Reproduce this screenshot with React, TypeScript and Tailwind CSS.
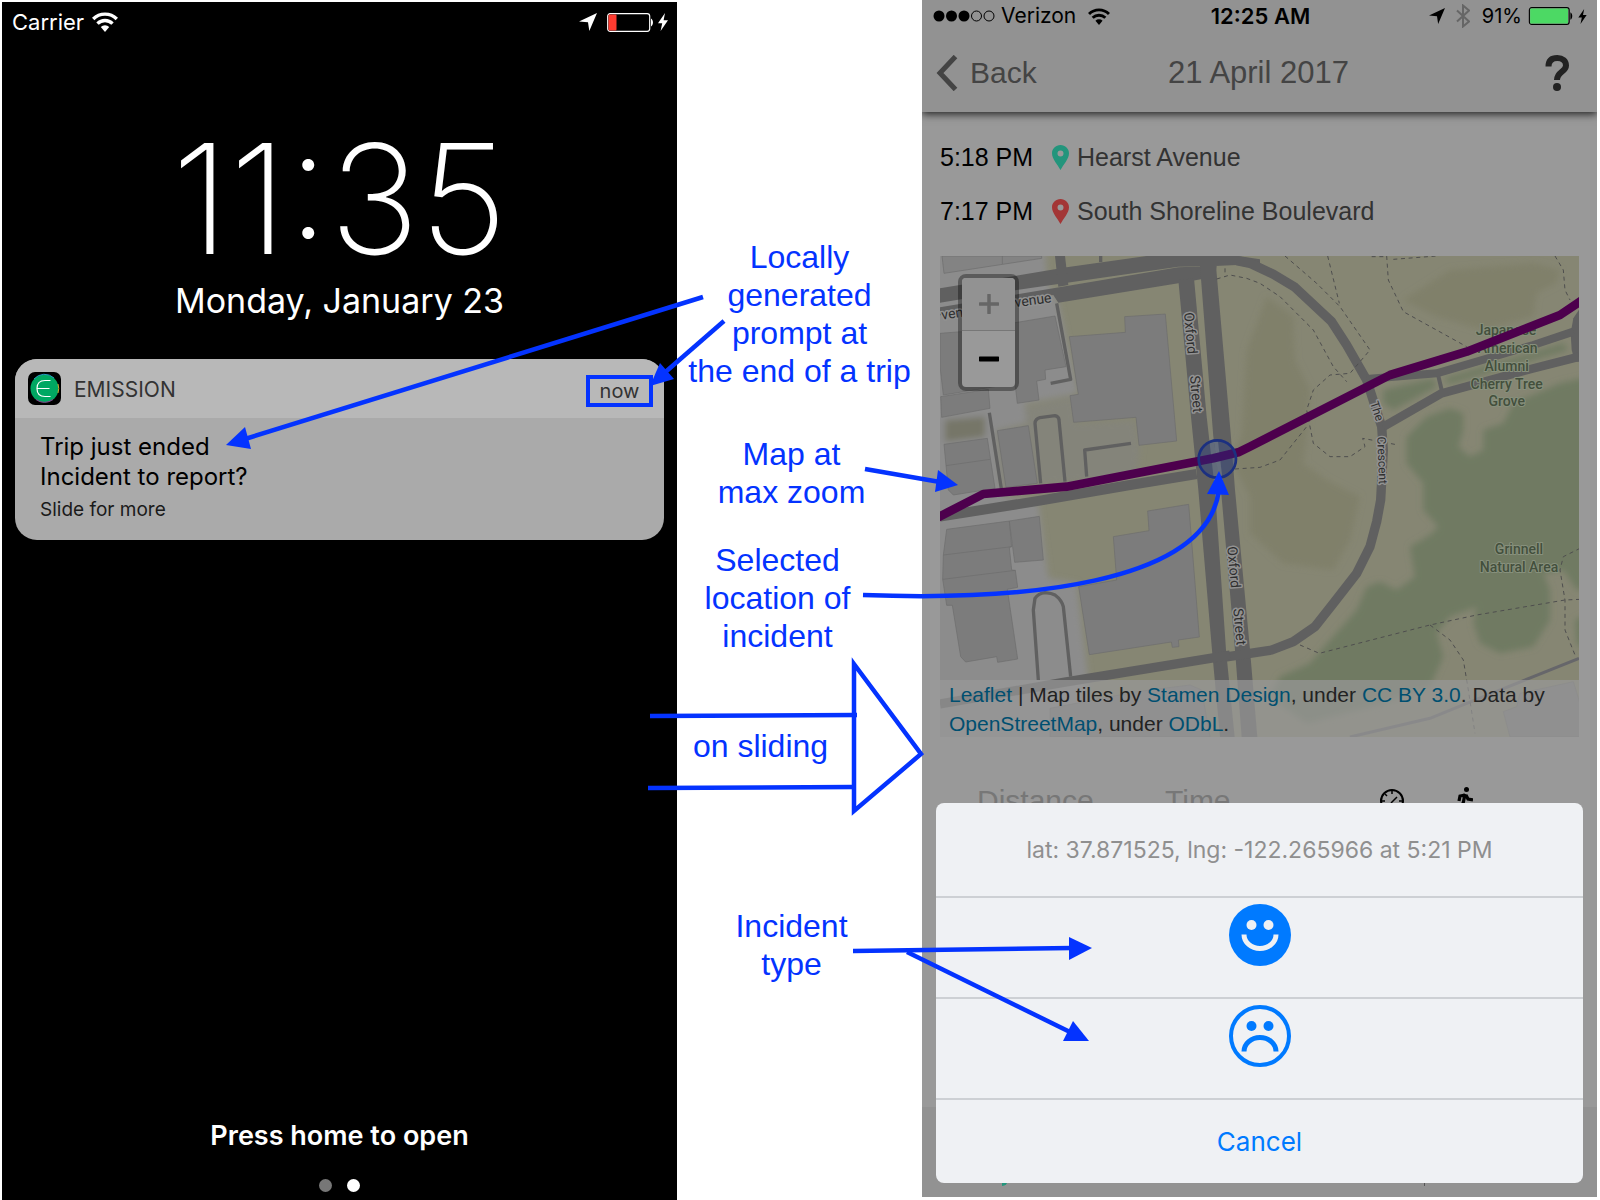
import React from "react";

const SANS = "font-['Liberation_Sans',sans-serif]";

function Wifi({ className }: { className: string }) {
  return (
    <svg viewBox="0 0 26 20" className={className} aria-hidden="true">
      <path d="M1.200 7a16.700 16.700 0 0 1 23.600 0" fill="none" stroke="currentColor" strokeWidth="3.400" />
      <path d="M5.500 11.600a10.600 10.600 0 0 1 15 0" fill="none" stroke="currentColor" strokeWidth="3.400" />
      <path d="M13 20l-4.200-5a6 6 0 0 1 8.400 0z" fill="currentColor" />
    </svg>
  );
}

function Locate({ className }: { className: string }) {
  return (
    <svg viewBox="0 0 18 18" className={className} aria-hidden="true">
      <path d="M18 0L10.300 18L9 9.300L0 8.500z" fill="currentColor" />
    </svg>
  );
}

function Bolt({ className }: { className: string }) {
  return (
    <svg viewBox="0 0 10 18" className={className} aria-hidden="true">
      <path d="M7 0L0 10.200h4.200L2.600 18 10 7.200H5.600z" fill="currentColor" />
    </svg>
  );
}

function Battery({ className, level, fill }: { className: string; level: number; fill: string }) {
  return (
    <svg viewBox="0 0 46 19" className={className} aria-hidden="true">
      <rect x="0.7" y="0.7" width="42" height="17.600" rx="2.500" fill="none" stroke="currentColor" strokeWidth="1.200" />
      <rect x="1.500" y="1.500" width={level} height="16" rx="1" fill={fill} />
      <path d="M44 5.500c2.600 1.500 2.600 6.500 0 8z" fill="currentColor" />
    </svg>
  );
}

function Pin({ color }: { color: string }) {
  return (
    <svg viewBox="0 0 17 25" className="h-[25px] w-[17px]" aria-hidden="true">
      <path fillRule="evenodd" fill={color} d="M8.500 0C13.300 0 17 3.700 17 8.300 17 14 11.500 19.500 8.500 25 5.500 19.500 0 14 0 8.300 0 3.700 3.700 0 8.500 0zM8.500 5.500a3 3 0 1 0 0 6 3 3 0 0 0 0-6z" />
    </svg>
  );
}

function AppIcon() {
  return (
    <svg viewBox="0 0 33 33" className="size-[33px]" aria-hidden="true">
      <rect width="33" height="33" rx="7" fill="#000" />
      <circle cx="16.500" cy="16.500" r="14" fill="#00a862" />
      <path d="M6 7a14 14 0 0 1 20 -1" fill="none" stroke="#2b9bc4" strokeWidth="1" />
      <path d="M30 12a14 14 0 0 1 0 9" fill="none" stroke="#d0b030" strokeWidth="1" />
      <path d="M8 27.500a14 14 0 0 0 17 0" fill="none" stroke="#8a3a8a" strokeWidth="1" />
      <path d="M22.500 8.500H17c-5 0-8 3-8 8s3 8 8 8h5.500M9 16.500h12.500" fill="none" stroke="#fff" strokeWidth="1.200" />
    </svg>
  );
}

function LockScreen() {
  return (
    <section className="mt-0.5 flex flex-col bg-black font-[Inter,sans-serif] text-white">
      <div className="flex h-10 items-center pl-2.5 pr-2">
        <span className="text-[22px] leading-6">Carrier</span>
        <Wifi className="ml-2 h-5 w-[26px]" />
        <Locate className="ml-auto size-[18px]" />
        <Battery className="ml-2.5 h-[19px] w-[46px]" level={8} fill="#ff3b30" />
        <Bolt className="ml-1 h-[18px] w-3" />
      </div>
      <h1 className="mt-[81px] text-center text-[152px] font-extralight leading-[152px]">11:35</h1>
      <p className="mt-1.5 text-center text-[34px] leading-10">Monday, January 23</p>
      <article className="ml-[13px] mr-[13px] mt-[38px] overflow-hidden rounded-[22px] bg-[#aaaaaa] text-black">
        <header className="flex h-[59px] items-center bg-[#b8b8b8] pl-[13px] pr-[11px] text-[#333333]">
          <AppIcon />
          <span className="ml-[13px] mt-0.5 text-[21px] leading-6">EMISSION</span>
          <span className="ml-auto mt-1 flex h-8 w-[67px] items-center justify-center border-4 border-[#0433ff] text-xl leading-6">now</span>
        </header>
        <div className="h-[122px] pl-[25px] pt-[14px]">
          <p className="text-2xl leading-[30px]">Trip just ended</p>
          <p className="text-2xl leading-[30px]">Incident to report?</p>
          <p className="mt-1 text-[19px] leading-7 text-[#1a1a1a]">Slide for more</p>
        </div>
      </article>
      <p className="mt-auto text-center text-[27px] font-semibold leading-8">Press home to open</p>
      <div className="mb-2 mt-[27px] flex justify-center gap-[15px]">
        <span className="size-[13px] rounded-full bg-[#777777]" />
        <span className="size-[13px] rounded-full bg-white" />
      </div>
    </section>
  );
}

function Notes() {
  return (
    <section className={`${SANS} flex flex-col whitespace-nowrap pt-[238px] text-center text-[32px] leading-[38px] text-[#0433ff]`}>
      <p>Locally<br />generated<br />prompt at<br />the end of a trip</p>
      <p className="mt-[45px] pr-4">Map at<br />max zoom</p>
      <p className="mt-[30px] pr-11">Selected<br />location of<br />incident</p>
      <p className="mt-[72px] pr-[78px]">on sliding</p>
      <p className="mt-[142px] pr-4">Incident<br />type</p>
    </section>
  );
}

const BUILDINGS = [
  "30,250 95,245 375,198 408,350 345,360 347,388 320,393 327,450 262,460 255,400 40,435 30,350",
  "32,440 175,418 180,475 35,502",
  "42,583 172,565 195,715 70,735 55,720",
  "202,542 295,527 322,700 228,712",
  "418,260 586,247 584,200 706,192 740,573 627,586 618,502 431,517 420,437 445,433",
  "50,838 238,813 245,890 238,892 245,960 256,961 263,1012 232,1018 263,1227 203,1237 200,1220 107,1236 92,1220 67,1066 50,1066 38,988 40,915",
  "238,813 328,799 340,930 254,937",
  "550,860 657,842 653,783 776,763 808,1161 745,1170 747,1190 727,1192 724,1176 478,1214 446,1010 560,990",
  "1720,1385 1760,1370 1770,1330 1930,1295 1950,1360 1950,1461 1740,1461",
  "360,1375 620,1325 780,1305 815,1320 840,1461 360,1461",
];

const PATHS = [
  "M885 55V80M860 87L900 75 950 85 990 100 1050 140 1150 240 1210 350 1250 395",
  "M1065 18L1160 100 1230 170 1320 300 1260 370 1200 375 1150 420 1130 480 1150 580 1200 620 1260 620 1305 590 1298 565 1405 585",
  "M1193 18L1228 160",
  "M1370 18L1375 90 1420 185 1610 290",
  "M1325 20H1370M1390 28L1520 18",
  "M1875 18L1900 60 1905 120 1920 150",
  "M915 657L990 652 1050 630 1130 530",
  "M1110 1185L1168 1210 1500 1125 1640 1095 1905 1050 1950 1048",
  "M1500 1125L1560 1170 1600 1230 1615 1320 1635 1450",
  "M1950 895L1900 920 1890 960 1905 1050 1905 1140 1935 1215",
];

function MapDrawing() {
  return (
    <svg viewBox="30 18 1917 1443" preserveAspectRatio="xMidYMid slice" className="size-full" role="img" aria-label="Trip map">
      <defs>
        <filter id="soft" x="-10%" y="-10%" width="120%" height="120%">
          <feGaussianBlur stdDeviation="9" />
        </filter>
      </defs>
      <rect x="0" y="0" width="2000" height="1500" fill="#868673" />
      <g filter="url(#soft)">
        <path fill="#8c8c8c" d="M0-20H345L350 90 385 160 445 430 285 460 290 520 200 540 220 740 325 760 355 985 440 1000 475 1290 480 1500H0z" />
        <path fill="#84847a" d="M290 470L430 440 440 520 615 510 630 600 620 680 210 715 195 540 290 530z" />
        <path fill="#767668" d="M45 510L165 500 165 560 45 575z" />
        <path fill="#80806a" d="M950 300L1010 140 1090 200 1095 330 1140 420 1130 560 1120 640 1190 690 1290 740 1260 870 1210 960 1060 940 960 850 960 740 900 620 935 560z" />
        <path fill="#80806a" d="M1420 150L1560 60 1810 40 1890 60 1880 100 1820 130 1810 200 1660 240 1520 200z" />
        <path fill="#6f7a62" d="M1980 380L1890 400 1750 460 1720 520 1660 540 1660 600 1620 620 1585 590 1600 540 1600 490 1560 475 1490 500 1430 560 1430 640 1480 700 1480 780 1525 830 1500 855 1440 890 1455 980 1400 1020 1350 995 1310 1010 1280 1080 1200 1170 1140 1240 1050 1280 1020 1340 1130 1420 1360 1360 1500 1310 1540 1220 1520 1150 1560 1100 1640 1070 1630 1120 1650 1180 1710 1210 1810 1190 1860 1110 1860 1020 1840 970 1900 960 1940 1020 1980 1020z" />
        <path fill="#6f7a62" d="M1360 420L1510 385 1520 410 1390 480 1360 460zM1540 385L1900 280 1915 300 1560 402zM1980 1090L1935 1110 1940 1180 1980 1210z" />
      </g>
      <g fill="#7c7c7c" stroke="#6d6d6d" strokeWidth="2">
        <path d="M36 18H335V25L42 70z" fill="#838383" />
        {BUILDINGS.map((points) => (
          <polygon key={points} points={points} />
        ))}
        <path d="M217 18V42M48 647L180 628M40 915L245 890M38 988L256 961" fill="none" />
      </g>
      <g fill="#606060">
        <path d="M30 115L410 52 650 18H925L990 28V58L920 45 855 48 745 50 260 120 30 158z" />
        <path d="M30 172L415 107 745 52 860 48 855 80 745 100 385 158 370 135 30 196z" />
        <path d="M375 18H405L415 105 385 110z" />
        <path d="M745 90L792 85 830 500 855 720 888 1200 914 1461H870L846 1200 805 720 783 500z" />
        <path d="M810 48H858L902 550 915 720 960 1200 982 1461H935L915 1200 873 720 850 560z" />
        <path d="M1950 175L1930 205 1922 250 1925 300 1935 335H1950z" />
      </g>
      <g fill="none" stroke="#606060" strokeLinejoin="round">
        <path strokeWidth="28" d="M920 32L960 40 1030 73 1095 112 1205 215 1250 285 1310 390 1355 530 1360 600 1352 750 1340 815 1320 890 1280 970 1210 1060 1155 1130 1090 1175 1025 1200 960 1210 880 1222" />
        <path strokeWidth="24" d="M1310 387L1520 370 1810 285 1930 245" />
        <path strokeWidth="26" d="M1360 530L1535 430 1810 355 1947 320" />
        <path strokeWidth="12" d="M1525 378L1535 420" />
        <path strokeWidth="30" d="M30 800L330 752 600 705 800 672" />
        <path strokeWidth="28" d="M30 1362L400 1297 840 1225 900 1215" />
        <path strokeWidth="10" d="M512 18V36M380 160L422 388 362 400M178 488L217 735M332 700L315 520Q316 506 330 503L375 497Q387 500 387 510L405 695M470 680L464 600 603 580" />
        <path strokeWidth="10" d="M325 1290L310 1080 315 1045Q325 1030 345 1028 365 1030 375 1035 395 1050 400 1070L422 1280" />
        <path strokeWidth="9" stroke="#66666a" d="M1947 1225L1610 1360 1500 1405 1260 1461" />
      </g>
      <g fill="none" stroke="#4e4e4e" strokeWidth="3" strokeDasharray="12 11">
        {PATHS.map((d) => (
          <path key={d} d={d} />
        ))}
      </g>
      <path d="M858 575L872 690" stroke="#8a8a78" strokeWidth="12" />
      <g className="font-[Roboto,sans-serif]" fill="#2e2e2e" stroke="#929292" strokeWidth="9" strokeLinejoin="round" paintOrder="stroke" fontSize="42">
        <text x="256" y="172" transform="rotate(-8 256 172)">venue</text>
        <text x="36" y="209" transform="rotate(-8 36 209)">ven</text>
        <text x="762" y="188" transform="rotate(85 762 188)">Oxford</text>
        <text x="780" y="378" transform="rotate(85 780 378)">Street</text>
        <text x="892" y="890" transform="rotate(85 892 890)">Oxford</text>
        <text x="910" y="1076" transform="rotate(85 910 1076)">Street</text>
        <text x="1320" y="458" transform="rotate(72 1320 458)" fontSize="36">The</text>
        <text x="1342" y="560" transform="rotate(88 1342 560)" fontSize="36">Crescent</text>
      </g>
      <g className="font-[Roboto,sans-serif]" fill="#434f3c" stroke="#87907c" strokeWidth="6" strokeLinejoin="round" paintOrder="stroke" fontSize="42" fontWeight="500" textAnchor="middle">
        <text x="1728" y="254">Japanese</text>
        <text x="1733" y="308">American</text>
        <text x="1730" y="362">Alumni</text>
        <text x="1730" y="416">Cherry Tree</text>
        <text x="1730" y="469">Grove</text>
        <text x="1767" y="911">Grinnell</text>
        <text x="1767" y="965">Natural Area</text>
      </g>
      <path d="M20 804L160 732 410 710 850 625 925 607 960 590 1380 375 1610 305 1890 195 1960 148" fill="none" stroke="#4d004d" strokeWidth="26" strokeLinejoin="round" />
      <circle cx="862" cy="627" r="56" fill="#1f3a8a" fillOpacity="0.35" stroke="#1c3080" strokeWidth="8" />
    </svg>
  );
}

function TripMap() {
  return (
    <div className="relative mx-[18px] h-[481px]">
      <MapDrawing />
      <div className="absolute left-[18px] top-[18px] flex w-[61px] flex-col overflow-hidden rounded-lg border-4 border-black/35 bg-[#999999] bg-clip-padding">
        <button type="button" aria-label="Zoom in" className="flex h-[53px] items-center justify-center border-b border-[#777777] bg-[#929292]">
          <svg viewBox="0 0 20 20" className="size-5"><path d="M10 1V19M1 10H19" stroke="#666666" strokeWidth="3.500" strokeLinecap="round" /></svg>
        </button>
        <button type="button" aria-label="Zoom out" className="flex h-14 items-center justify-center">
          <svg viewBox="0 0 20 20" className="size-5"><path d="M1 10H19" stroke="#000" strokeWidth="5" strokeLinecap="round" /></svg>
        </button>
      </div>
      <p className={`${SANS} absolute inset-x-0 bottom-0 h-[57px] bg-[#999999]/70 pl-[9px] text-[21px] leading-[29px] text-[#222222]`}>
        <a href="#leaflet" className="text-[#004f70]">Leaflet</a> | Map tiles by{" "}
        <a href="#stamen" className="text-[#004f70]">Stamen Design</a>, under{" "}
        <a href="#cc" className="text-[#004f70]">CC BY 3.0</a>. Data by{" "}
        <br />
        <a href="#osm" className="text-[#004f70]">OpenStreetMap</a>, under{" "}
        <a href="#odbl" className="text-[#004f70]">ODbL</a>.
      </p>
    </div>
  );
}

function Smile() {
  return (
    <svg viewBox="0 0 62 62" className="size-[62px]" aria-hidden="true">
      <circle cx="31" cy="31" r="31" fill="#007aff" />
      <circle cx="22.500" cy="21" r="5" fill="#eff1f4" />
      <circle cx="39.500" cy="21" r="5" fill="#eff1f4" />
      <path d="M15 30.500a16 14 0 0 0 32 0" fill="none" stroke="#eff1f4" strokeWidth="5" />
    </svg>
  );
}

function Frown() {
  return (
    <svg viewBox="0 0 62 62" className="size-[62px]" aria-hidden="true">
      <circle cx="31" cy="31" r="29" fill="none" stroke="#007aff" strokeWidth="4" />
      <circle cx="22.500" cy="21" r="5" fill="#007aff" />
      <circle cx="39.500" cy="21" r="5" fill="#007aff" />
      <path d="M15 46.500a16 14 0 0 1 32 0" fill="none" stroke="#007aff" strokeWidth="5" />
    </svg>
  );
}

function ActionSheet() {
  return (
    <div role="dialog" aria-label="Report incident" className="absolute inset-x-3.5 bottom-3.5 flex flex-col overflow-hidden rounded-lg bg-[#eff1f4] font-[Inter,sans-serif] text-[#007aff]">
      <p className="flex h-[93px] items-center justify-center text-[23px] leading-7 text-[#8f8f8f]">lat: 37.871525, lng: -122.265966 at 5:21 PM</p>
      <button type="button" aria-label="Good" className="flex h-[101px] justify-center border-t-2 border-[#cdd0d4] pt-1.5"><Smile /></button>
      <button type="button" aria-label="Bad" className="flex h-[101px] justify-center border-t-2 border-[#cdd0d4] pt-1.5"><Frown /></button>
      <button type="button" className="h-[85px] border-t-2 border-[#cdd0d4] text-[26px] leading-8">Cancel</button>
    </div>
  );
}

function TripRow({ time, place, color }: { time: string; place: string; color: string }) {
  return (
    <div className="flex h-[54px] items-center text-[25px] leading-8">
      <span className="w-28 text-black">{time}</span>
      <Pin color={color} />
      <span className="ml-2 text-[#333333]">{place}</span>
    </div>
  );
}

function TripScreen() {
  return (
    <section className={`${SANS} relative mb-[3px] flex flex-col overflow-hidden bg-[#999999]`}>
      <header className="relative bg-[#929292] shadow-[0_2px_8px_0px_rgba(0,0,0,0.8)]">
        <div className="grid h-8 grid-cols-3 items-center pl-[11px] pr-[9px] font-[Inter,sans-serif] text-black">
          <div className="flex items-center">
            <svg viewBox="0 0 62 12" className="h-3 w-[62px]" aria-hidden="true">
              <g fill="#000">
                <circle cx="6" cy="6" r="5.500" /><circle cx="18.500" cy="6" r="5.500" /><circle cx="31" cy="6" r="5.500" />
              </g>
              <g fill="none" stroke="#000"><circle cx="43.500" cy="6" r="5" /><circle cx="56" cy="6" r="5" /></g>
            </svg>
            <span className="ml-1.5 text-[21px] leading-6">Verizon</span>
            <Wifi className="ml-3 h-[17px] w-[22px]" />
          </div>
          <span className="text-center text-[22px] font-semibold leading-6">12:25 AM</span>
          <div className="flex items-center justify-end">
            <Locate className="size-4" />
            <svg viewBox="0 0 14 24" className="ml-[11px] h-6 w-3.5 text-[#666666]" aria-hidden="true">
              <path d="M1 6.500L13 17.500 7 22.500V1.500L13 6.500 1 17.500" fill="none" stroke="currentColor" strokeWidth="2" />
            </svg>
            <span className="ml-3 text-xl leading-6">91%</span>
            <Battery className="ml-1.5 h-[18px] w-[45px]" level={40} fill="#4cd964" />
            <Bolt className="ml-1 h-[15px] w-[11px]" />
          </div>
        </div>
        <div className="grid h-20 grid-cols-3 items-center pl-3.5 pr-4 pt-0.5 text-[31px] leading-9 text-[#444444]">
          <button type="button" className="flex items-center gap-3 text-[30px]">
            <svg viewBox="0 0 22 36" className="h-9 w-[22px]" aria-hidden="true">
              <path d="M19.500 1.500L4 18 19.500 34.500" fill="none" stroke="currentColor" strokeWidth="5" />
            </svg>
            Back
          </button>
          <h2 className="whitespace-nowrap text-center">21 April 2017</h2>
          <button type="button" aria-label="Help" className="ml-auto mr-3 text-[#222222]">
            <svg viewBox="0 0 24 36" className="h-9 w-6">
              <path d="M3.500 11.500C3.500 5.500 7 3 12.300 3 17.500 3 21 6 21 10.500 21 17 12 16.500 12 25" fill="none" stroke="currentColor" strokeWidth="6" />
              <circle cx="12" cy="32" r="4" fill="currentColor" />
            </svg>
          </button>
        </div>
      </header>
      <div className="pb-[18px] pl-[18px] pt-[18px]">
        <TripRow time="5:18 PM" place="Hearst Avenue" color="#23957c" />
        <TripRow time="7:17 PM" place="South Shoreline Boulevard" color="#a33636" />
      </div>
      <TripMap />
      <div className="mt-[46px] flex h-9 items-center pl-[55px] text-[30px] leading-9 text-[#777777]">
        <span className="w-[188px]">Distance</span>
        <span>Time</span>
        <svg viewBox="0 0 24 24" className="ml-[149px] size-6 text-black" aria-hidden="true">
          <circle cx="12" cy="12" r="11" fill="none" stroke="currentColor" strokeWidth="2" />
          <path d="M11 14L17 8M12 2V5M2 12H5M19 12H22M5 5L7 7" stroke="currentColor" strokeWidth="1.500" />
        </svg>
        <svg viewBox="0 0 16 28" className="ml-[53px] h-7 w-4 text-black" aria-hidden="true">
          <circle cx="9.500" cy="2.500" r="2.500" fill="currentColor" />
          <path d="M8 7L6 17 11 27M6 16L2 27M8 8L3 9 2 14M9 8L11 12 16 13" fill="none" stroke="currentColor" strokeWidth="3.200" />
        </svg>
      </div>
      <div className="mt-auto flex h-[90px] items-end justify-between bg-[#929292] pb-[11px] pl-20 pr-[172px]">
        <span className="h-1.5 w-1.5 rounded-br-full bg-[#23957c]" />
        <span className="h-1.5 w-px bg-[#555555]" />
      </div>
      <ActionSheet />
    </section>
  );
}

function Arrows() {
  return (
    <svg viewBox="0 0 1600 1200" preserveAspectRatio="none" className="pointer-events-none absolute inset-0 size-full" aria-hidden="true">
      <g fill="none" stroke="#0433ff" strokeWidth="4.500">
        <path d="M703 297L245 439" />
        <path d="M724 321L662 375" />
        <path d="M865 469L940 482" />
        <path d="M863 595C1020 601 1207 585 1219 490" />
        <path d="M650 716L857 715M648 788L853 787" />
        <path d="M854 664L921 754 854 811z" />
        <path d="M853 951L1072 948" />
        <path d="M907 952L1070 1032" />
      </g>
      <g fill="#0433ff">
        <path d="M226 445L245 427 251 449z" />
        <path d="M650 386L660 363 674 379z" />
        <path d="M958 485L938 470 935 492z" />
        <path d="M1219 471L1207 494 1229 495z" />
        <path d="M1092 948L1069 937V960z" />
        <path d="M1089 1041L1073 1021 1063 1041z" />
      </g>
    </svg>
  );
}

export default function App() {
  return (
    <main className="relative grid min-h-screen grid-cols-[675fr_245fr_675fr] bg-white pl-0.5 pr-[3px]">
      <LockScreen />
      <Notes />
      <TripScreen />
      <Arrows />
    </main>
  );
}
